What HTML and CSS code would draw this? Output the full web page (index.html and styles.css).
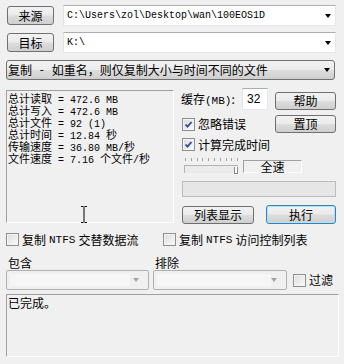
FILE: index.html
```html
<!DOCTYPE html>
<html lang="zh-CN">
<head>
    <meta charset="UTF-8">
    <title>FastCopy</title>
    <link rel="stylesheet" href="styles.css">
</head>
<body>

    <div class="win">
        <div class="path-row">
            <button class="btn btn-side">来源</button>
            <div class="path">C:\Users\zol\Desktop\wan\100EOS1D<span class="arrow"></span></div>
        </div>
        <div class="path-row second">
            <button class="btn btn-side">目标</button>
            <div class="path">K:\<span class="arrow"></span></div>
        </div>

        <div class="mode">复制<span class="mono"> - </span>如重名，则仅复制大小与时间不同的文件<span class="arrow"></span></div>

        <div class="main">
            <div class="stats">
                <div class="line"><span class="cj">总计读取</span> = 472.6 MB</div>
                <div class="line"><span class="cj">总计写入</span> = 472.6 MB</div>
                <div class="line"><span class="cj">总计文件</span> = 92 (1)</div>
                <div class="line"><span class="cj">总计时间</span> = 12.84 <span class="cj">秒</span></div>
                <div class="line"><span class="cj">传输速度</span> = 36.80 MB/<span class="cj">秒</span></div>
                <div class="line"><span class="cj">文件速度</span> = 7.16 <span class="cj">个文件</span>/<span class="cj">秒</span></div>
                <svg class="ibeam" width="8" height="17" viewBox="0 0 8 17">
                    <path d="M1 0.5h2.5M4.5 0.5h2.5M4 1v15M1 16.5h2.5M4.5 16.5h2.5" stroke="#000" stroke-width="1" fill="none"/>
                </svg>
            </div>

            <div class="panel">
                <div class="cache">
                    <span class="cache-label">缓存<span class="mono">(MB)</span>:</span>
                    <div class="num-input">32</div>
                    <button class="btn btn-small">帮助</button>
                </div>
                <div class="panel-row">
                    <label class="check"><span class="box on"></span>忽略错误</label>
                    <button class="btn btn-small">置顶</button>
                </div>
                <div class="panel-row third">
                    <label class="check"><span class="box on"></span>计算完成时间</label>
                </div>
                <div class="speed">
                    <div class="slider">
                        <div class="ticks"></div>
                        <div class="track"><span class="thumb"></span></div>
                    </div>
                    <div class="speed-label">全速</div>
                </div>
                <div class="progress"></div>
                <div class="actions">
                    <button class="btn btn-list">列表显示</button>
                    <button class="btn btn-run">执行</button>
                </div>
            </div>
        </div>

        <div class="opts">
            <label class="check opt-first"><span class="box"></span>复制 <span class="mono">NTFS</span> 交替数据流</label>
            <label class="check"><span class="box"></span>复制 <span class="mono">NTFS</span> 访问控制列表</label>
        </div>

        <div class="filters">
            <div class="flabel">包含</div>
            <div class="flabel">排除</div>
            <div></div>
            <div class="combo"><span class="field"></span><span class="arrow grey"></span></div>
            <div class="combo"><span class="field"></span><span class="arrow grey"></span></div>
            <label class="check"><span class="box"></span>过滤</label>
        </div>

        <div class="log">已完成。</div>
    </div>

</body>
</html>
```

FILE: styles.css
```css
* {
    box-sizing: border-box;
}
body {
    margin: 0;
    background: #f0f0f0;
    color: #000;
    font: 12px/14px "Noto Sans CJK SC", sans-serif;
}
.win {
    padding: 5px 7px 0 6px;
}
.mono {
    font: 11px "Liberation Mono", monospace;
}
.mode .mono {
    white-space: pre;
}

/* buttons */
.btn {
    flex: none;
    font: inherit;
    color: #000;
    padding: 0;
    border: 1px solid #707070;
    border-radius: 3px;
    background: linear-gradient(#f2f2f2 0%, #ebebeb 48%, #dddddd 52%, #cfcfcf 100%);
    line-height: 14px;
}
.btn-side {
    width: 47px;
    height: 19px;
    margin-left: 1px;
}
.btn-small {
    width: 61px;
    height: 18px;
}
.btn-list {
    width: 72px;
    height: 18px;
}
.btn-run {
    width: 70px;
    height: 19px;
    border-color: #3c7fb1;
    box-shadow: inset 0 0 0 1px #a8e4fb;
}

/* path rows */
.path-row {
    display: flex;
    align-items: center;
    height: 21px;
}
.path-row.second {
    margin-top: 6px;
}
.path {
    flex: 1;
    height: 21px;
    margin-left: 9px;
    margin-right: 1px;
    padding-left: 3px;
    display: flex;
    align-items: center;
    background: #fff;
    border: 1px solid;
    border-color: #abadb3 #e3e9ef #e3e9ef #e2e3ea;
    font: 10px "Liberation Mono", monospace;
    white-space: nowrap;
}
.arrow {
    flex: none;
    margin-left: auto;
    margin-right: 4px;
    width: 0;
    height: 0;
    border-left: 3.5px solid transparent;
    border-right: 3.5px solid transparent;
    border-top: 4px solid #000;
}
.arrow.grey {
    border-top-color: #a2a2a2;
    margin-right: 6px;
}

.mode {
    margin-top: 7px;
    margin-right: 2px;
    height: 20px;
    padding-left: 1px;
    display: flex;
    align-items: center;
    border: 1px solid #707070;
    border-radius: 3px;
    background: linear-gradient(#f2f2f2 0%, #ebebeb 48%, #dddddd 52%, #cfcfcf 100%);
}

/* main area */
.main {
    display: flex;
    margin-top: 10px;
}
.stats {
    flex: none;
    position: relative;
    width: 168px;
    height: 133px;
    padding: 1px 0 0 1px;
    border: 1px solid;
    border-color: #a0a0a0 #fff #fff #a0a0a0;
}
.line {
    height: 12px;
    font: 10px/12px "Liberation Mono", monospace;
    white-space: nowrap;
}
.cj {
    font: 11px/12px "Noto Sans CJK SC", sans-serif;
}
.ibeam {
    position: absolute;
    left: 73px;
    top: 115px;
}

.panel {
    flex: none;
    width: 155px;
    margin-left: 7px;
    display: flex;
    flex-direction: column;
}
.cache {
    display: flex;
    align-items: flex-end;
    height: 22px;
    margin-top: -2px;
}
.cache-label {
    flex: none;
    width: 61px;
    align-self: center;
    white-space: nowrap;
}
.num-input {
    flex: none;
    width: 26px;
    height: 22px;
    margin-right: 7px;
    padding: 3px 0 0 4px;
    background: #fff;
    border: 1px solid;
    border-color: #abadb3 #e3e9ef #e3e9ef #e2e3ea;
    font: 12px/14px "Liberation Sans", sans-serif;
}
.panel-row {
    display: flex;
    align-items: center;
    justify-content: space-between;
    height: 18px;
    margin-top: 5px;
}
.panel-row.third {
    height: 13px;
}

/* checkboxes */
.check {
    flex: none;
    display: flex;
    align-items: center;
    gap: 3px;
    height: 13px;
    white-space: nowrap;
    margin-left: 1px;
}
.box {
    width: 13px;
    height: 13px;
    flex: none;
    border: 1px solid #8f8f8f;
    background: linear-gradient(135deg, #dcdcdc, #fbfbfb);
    box-shadow: inset 0 0 0 1px #f4f4f4;
}
.box.on {
    background-image: url("data:image/svg+xml,%3Csvg xmlns='http://www.w3.org/2000/svg' width='11' height='11'%3E%3Cpath d='M2.5 5.5l2 2.2L8.5 3' stroke='%232a4a9e' stroke-width='1.8' fill='none'/%3E%3C/svg%3E"), linear-gradient(135deg, #dcdcdc, #fbfbfb);
    background-repeat: no-repeat;
}

/* slider */
.speed {
    display: flex;
    align-items: flex-end;
    height: 17px;
    margin-top: 5px;
}
.slider {
    flex: none;
    width: 54px;
    height: 17px;
    margin-left: 3px;
    display: flex;
    flex-direction: column;
}
.ticks {
    height: 3px;
    margin-top: 2px;
    margin-left: 1px;
    background: repeating-linear-gradient(90deg, #a0a0a0 0 1px, transparent 1px 5.8px);
}
.track {
    position: relative;
    height: 8px;
    margin-top: 4px;
    border-top: 1px solid #b4b4b4;
    border-left: 1px solid #b4b4b4;
    background: #ebebeb;
}
.thumb {
    position: absolute;
    right: 0;
    top: 1px;
    width: 4px;
    height: 7px;
    border: 1px solid #8a8a8a;
    border-top: none;
    background: #fff;
}
.speed-label {
    flex: none;
    width: 59px;
    height: 13px;
    margin-left: 5px;
    text-align: center;
    line-height: 12px;
    border: 1px solid;
    border-color: #a0a0a0 #fff #fff #a0a0a0;
}
.progress {
    height: 16px;
    margin-top: 8px;
    margin-left: 1px;
    border: 1px solid #bcbcbc;
    background: #e6e6e6;
}
.actions {
    display: flex;
    justify-content: space-between;
    align-items: center;
    margin-top: 8px;
    margin-left: 1px;
}

/* options & filters */
.opts {
    display: flex;
    margin-top: 9px;
}
.opt-first {
    width: 156px;
    margin-left: 0;
}
.filters {
    display: grid;
    grid-template-columns: 143px 134px 1fr;
    column-gap: 4px;
    margin-top: 10px;
}
.flabel {
    height: 14px;
    padding-left: 2px;
    line-height: 14px;
}
.filters .check {
    align-self: center;
    margin-left: 2px;
}
.combo {
    height: 20px;
    display: flex;
    align-items: center;
    padding: 3px;
    border: 1px solid #b0b0b0;
    border-radius: 2px;
    background: #f0f0f0;
}
.field {
    width: 120px;
    height: 100%;
    background: #f6f6f6;
}
.log {
    height: 63px;
    margin-top: 4px;
    margin-right: -2px;
    padding: 1px 0 0 1px;
    border: 1px solid;
    border-color: #a0a0a0 #fff #fff #a0a0a0;
}
```
